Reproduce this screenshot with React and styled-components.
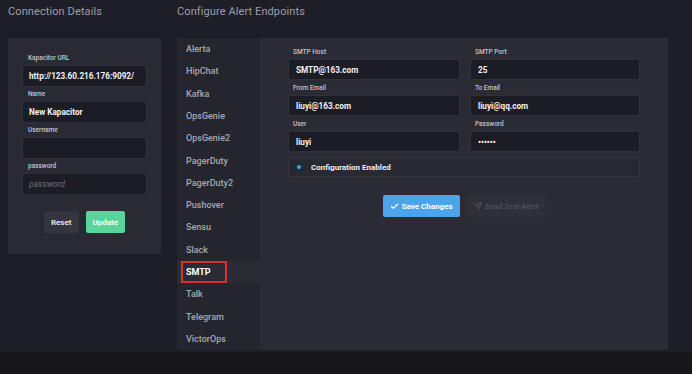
import React from 'react';
import styled, { createGlobalStyle } from 'styled-components';
import { Check, Send } from 'lucide-react';

const GlobalStyle = createGlobalStyle`
  html, body {
    margin: 0;
    padding: 0;
    background: #16161b;
    font-family: Roboto, "Helvetica Neue", Arial, sans-serif;
  }
`;

const endpoints = [
  'Alerta', 'HipChat', 'Kafka', 'OpsGenie', 'OpsGenie2', 'PagerDuty', 'PagerDuty2',
  'Pushover', 'Sensu', 'Slack', 'SMTP', 'Talk', 'Telegram', 'VictorOps'
];

const App = () => {
  return (
    <Page>
      <GlobalStyle />
      <LeftColumn>
        <Title>Connection Details</Title>
        <ConnectionPanel>
          <Field>
            <Label>Kapacitor URL</Label>
            <Input defaultValue="http://123.60.216.176:9092/" />
          </Field>
          <Field>
            <Label>Name</Label>
            <Input defaultValue="New Kapacitor" />
          </Field>
          <Field>
            <Label>Username</Label>
            <Input defaultValue="" />
          </Field>
          <Field>
            <Label>password</Label>
            <Input placeholder="password" />
          </Field>
          <ButtonRow spacing="13px">
            <Button variant="default">Reset</Button>
            <Button variant="success">Update</Button>
          </ButtonRow>
        </ConnectionPanel>
      </LeftColumn>

      <RightColumn>
        <Title>Configure Alert Endpoints</Title>
        <EndpointsPanel>
          <Sidebar>
            {endpoints.map(name => (
              <SidebarItem key={name} active={name === 'SMTP'}>
                <ItemLabel marked={name === 'SMTP'}>{name}</ItemLabel>
              </SidebarItem>
            ))}
          </Sidebar>
          <ConfigPanel>
            <FieldGrid>
              <Field>
                <Label>SMTP Host</Label>
                <Input defaultValue="SMTP@163.com" />
              </Field>
              <Field>
                <Label>SMTP Port</Label>
                <Input defaultValue="25" />
              </Field>
              <Field>
                <Label>From Email</Label>
                <Input defaultValue="liuyi@163.com" />
              </Field>
              <Field>
                <Label>To Email</Label>
                <Input defaultValue="liuyi@qq.com" />
              </Field>
              <Field>
                <Label>User</Label>
                <Input defaultValue="liuyi" />
              </Field>
              <Field>
                <Label>Password</Label>
                <Input type="password" defaultValue="123456" />
              </Field>
            </FieldGrid>
            <Toggle>
              <RadioDot />
              <span>Configuration Enabled</span>
            </Toggle>
            <ButtonRow spacing="18px">
              <Button variant="primary">
                <Check size={9} strokeWidth={3.5} />
                Save Changes
              </Button>
              <Button variant="disabled">
                <Send size={8} strokeWidth={3} />
                Send Test Alert
              </Button>
            </ButtonRow>
          </ConfigPanel>
        </EndpointsPanel>
      </RightColumn>
    </Page>
  );
};

const Page = styled.div`
  display: flex;
  gap: 16px;
  height: 352px;
  padding: 0 0 0 8px;
  box-sizing: border-box;
  background: #1e1e26;
`;

const LeftColumn = styled.div`
  width: 153px;
  display: flex;
  flex-direction: column;
`;

const RightColumn = styled.div`
  display: flex;
  flex-direction: column;
`;

const Title = styled.h2`
  margin: 0;
  height: 38px;
  padding-top: 5px;
  box-sizing: border-box;
  font-size: 11px;
  font-weight: 400;
  letter-spacing: 0.1px;
  color: #9c9daa;
`;

const ConnectionPanel = styled.div`
  height: 216px;
  box-sizing: border-box;
  padding: 16px 14px 0;
  background: #292a33;
  display: flex;
  flex-direction: column;
  gap: 3px;
`;

const Field = styled.div`
  display: flex;
  flex-direction: column;
`;

const Label = styled.label`
  font-size: 6.5px;
  font-weight: 500;
  color: #c3c4ce;
  padding-left: 6px;
  height: 8px;
  line-height: 8px;
  margin-bottom: 3px;
`;

const Input = styled.input`
  height: 22px;
  box-sizing: border-box;
  padding: 0 6px;
  border: 1px solid #30313b;
  border-radius: 2px;
  background: #1c1c24;
  color: #f2f2f6;
  font-family: inherit;
  font-size: 8.2px;
  font-weight: 700;
  outline: none;

  &::placeholder {
    color: #6f707b;
    font-style: italic;
    font-weight: 400;
    font-size: 8.5px;
  }
`;

const ButtonRow = styled.div`
  display: flex;
  justify-content: center;
  gap: 7px;
  margin-top: ${props => props.spacing};
`;

const buttonColors = {
  default: { bg: '#34353f', fg: '#e0e1e8' },
  success: { bg: '#5dd39c', fg: '#eafff4' },
  primary: { bg: '#4ca4ec', fg: '#ffffff' },
  disabled: { bg: '#2f3039', fg: '#4e4f5a' }
};

const Button = styled.button`
  height: 22px;
  padding: 0 7px;
  display: inline-flex;
  align-items: center;
  gap: 3px;
  border: none;
  border-radius: 2px;
  font-family: inherit;
  font-size: 8px;
  font-weight: 700;
  font-style: ${props => props.variant === 'disabled' ? 'italic' : 'normal'};
  background: ${props => buttonColors[props.variant].bg};
  color: ${props => buttonColors[props.variant].fg};
`;

const EndpointsPanel = styled.div`
  display: flex;
  width: 491px;
  height: 312px;
`;

const Sidebar = styled.div`
  width: 83px;
  background: #24252d;
  display: flex;
  flex-direction: column;
`;

const SidebarItem = styled.div`
  height: 22.3px;
  display: flex;
  align-items: center;
  padding-left: 4px;
  font-size: 9px;
  font-weight: ${props => props.active ? 700 : 500};
  color: ${props => props.active ? '#ffffff' : '#a7a8b3'};
  background: ${props => props.active ? '#2a2b34' : 'transparent'};
`;

const ItemLabel = styled.span`
  height: 100%;
  display: flex;
  align-items: center;
  padding: 0 ${props => props.marked ? '14px' : '0'} 0 3px;
  box-sizing: border-box;
  border: ${props => props.marked ? '2px solid #d8322d' : '2px solid transparent'};
  border-radius: 1px;
`;

const ConfigPanel = styled.div`
  flex: 1;
  background: #2a2b34;
  padding: 10px 28px 0;
  display: flex;
  flex-direction: column;
`;

const FieldGrid = styled.div`
  display: grid;
  grid-template-columns: 172px 170px;
  column-gap: 10px;
  row-gap: 4px;

  ${Label} {
    padding-left: 5px;
  }

  ${Input} {
    height: 21px;
    padding: 0 7px;
  }
`;

const Toggle = styled.div`
  margin-top: 5px;
  height: 20px;
  box-sizing: border-box;
  border: 1px solid #33343e;
  border-radius: 2px;
  background: #282931;
  display: flex;
  align-items: center;
  gap: 8px;
  padding-left: 6px;
  font-size: 8px;
  font-weight: 700;
  color: #eeeef3;
`;

const RadioDot = styled.span`
  width: 4px;
  height: 4px;
  border-radius: 50%;
  background: #4aa0e6;
  border: 2px solid #1a2f46;
`;

export default App;
